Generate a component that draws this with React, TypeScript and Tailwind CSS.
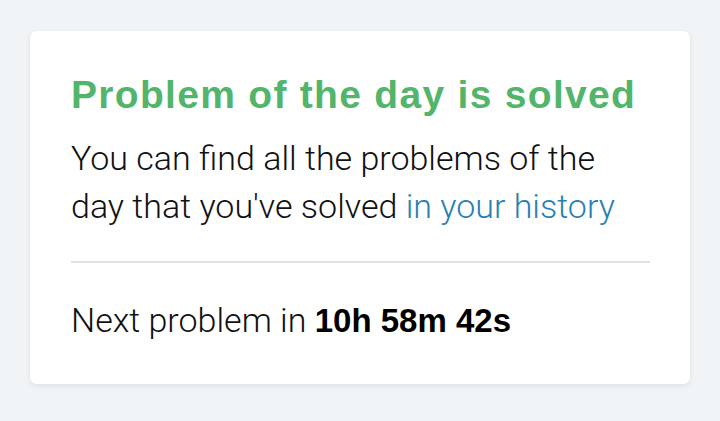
export default function App() {
  return (
    <div className="w-[720px] h-[421px] bg-[#f0f4f7] pt-[31px] pl-[30px]" style={{ fontFamily: "Roboto, 'Noto Sans', sans-serif" }}>
      <div className="w-[660px] h-[353px] bg-white rounded-[7px] shadow-[0_2px_6px_rgba(0,0,0,0.08)] px-[41px] pt-[44px]">
        <h1 className="text-[39px] leading-[40px] font-bold text-[#52b56b] font-['Liberation_Sans','Arial',sans-serif] tracking-[1.3px] whitespace-nowrap">
          Problem of the day is solved
        </h1>
        <p className="mt-[19px] text-[34px] leading-[48px] font-light text-[#111] whitespace-nowrap">
          You can find all the problems of the
          <br />
          day that you've solved <span className="text-[#2b7fb0]">in your history</span>
        </p>
        <div className="mt-[31px] h-[2px] bg-[#e2e2e2] w-[579px]" />
        <p className="mt-[37px] text-[34px] leading-[40px] font-light text-[#111]">
          Next problem in{" "}
          <span className="font-bold text-black font-['Liberation_Sans','Arial',sans-serif] text-[33px]">10h 58m 42s</span>
        </p>
      </div>
    </div>
  );
}
